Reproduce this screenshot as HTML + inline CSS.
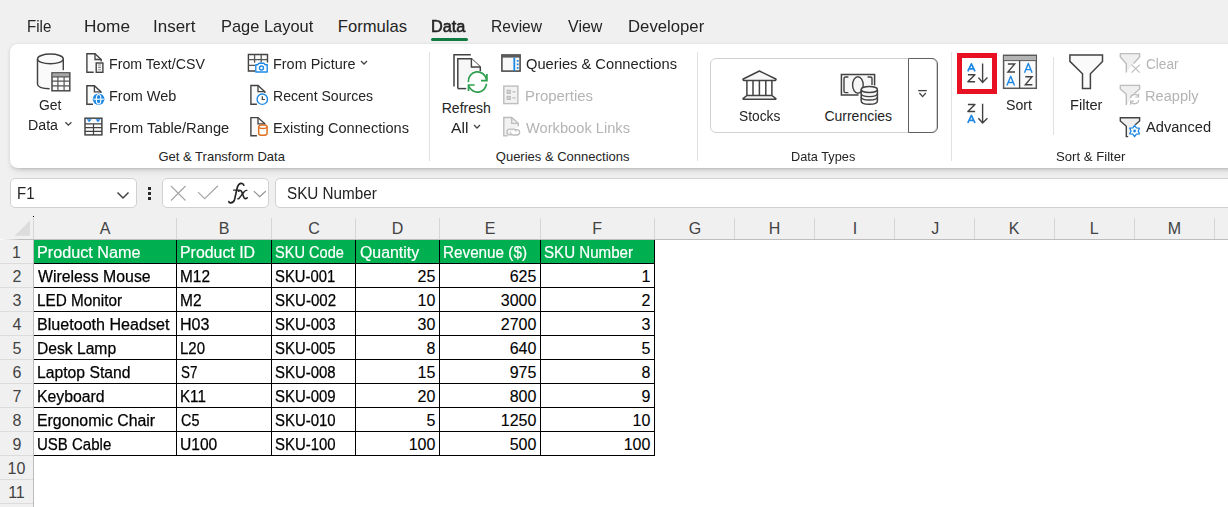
<!DOCTYPE html>
<html><head><meta charset="utf-8"><style>
html,body{margin:0;padding:0;}
body{width:1228px;height:507px;overflow:hidden;position:relative;background:#f0f0f0;font-family:"Liberation Sans",sans-serif;}
.t{position:absolute;white-space:nowrap;line-height:1;}
svg{overflow:visible}
</style></head><body>
<div style="position:absolute;left:0;top:208px;width:1228px;height:299px;background:#fff;"></div>
<div class="t" style="left:27.19px;top:19px;font-size:16.6px;color:#242424;transform:scaleX(0.9095);transform-origin:0 0;">File</div>
<div class="t" style="left:83.56px;top:19px;font-size:16.6px;color:#242424;transform:scaleX(1.0387);transform-origin:0 0;">Home</div>
<div class="t" style="left:153.48px;top:19px;font-size:16.6px;color:#242424;transform:scaleX(1.0222);transform-origin:0 0;">Insert</div>
<div class="t" style="left:220.61px;top:19px;font-size:16.6px;color:#242424;transform:scaleX(0.9905);transform-origin:0 0;">Page Layout</div>
<div class="t" style="left:337.80px;top:19px;font-size:16.6px;color:#242424;">Formulas</div>
<div class="t" style="left:490.66px;top:19px;font-size:16.6px;color:#242424;transform:scaleX(0.9371);transform-origin:0 0;">Review</div>
<div class="t" style="left:568.30px;top:19px;font-size:16.6px;color:#242424;transform:scaleX(0.9650);transform-origin:0 0;">View</div>
<div class="t" style="left:627.89px;top:19px;font-size:16.6px;color:#242424;transform:scaleX(1.0079);transform-origin:0 0;">Developer</div>
<div class="t" style="left:431.02px;top:19px;font-size:16.6px;color:#242424;transform:scaleX(0.9821);transform-origin:0 0;-webkit-text-stroke:0.6px #242424;">Data</div>
<div style="position:absolute;left:431px;top:38px;width:37px;height:3px;background:#107c41;border-radius:2px;"></div>
<div style="position:absolute;left:6px;top:166px;width:1240px;height:12px;background:linear-gradient(#d2d2d2,#d2d2d2 16%,#e3e3e3 33%,#ececec 66%,#f0f0f0);-webkit-mask-image:linear-gradient(to right,transparent 2px,#000 16px);"></div>
<div style="position:absolute;left:10px;top:44px;width:1240px;height:124px;background:#fff;border-radius:8px;box-shadow:0 1px 4px rgba(0,0,0,0.14);"></div>
<div style="position:absolute;left:429px;top:52px;width:1px;height:109px;background:#e1e1e1;"></div>
<div style="position:absolute;left:697px;top:52px;width:1px;height:109px;background:#e1e1e1;"></div>
<div style="position:absolute;left:951px;top:52px;width:1px;height:109px;background:#e1e1e1;"></div>
<div style="position:absolute;left:1053px;top:57px;width:1px;height:78px;background:#e1e1e1;"></div>
<div class="t" style="left:158.50px;top:150px;font-size:13px;color:#242424;">Get &amp; Transform Data</div>
<div class="t" style="left:495.80px;top:150px;font-size:13px;color:#242424;">Queries &amp; Connections</div>
<div class="t" style="left:790.82px;top:150px;font-size:13px;color:#242424;transform:scaleX(0.9808);transform-origin:0 0;">Data Types</div>
<div class="t" style="left:1055.50px;top:150px;font-size:13px;color:#242424;transform:scaleX(1.0116);transform-origin:0 0;">Sort &amp; Filter</div>
<svg style="position:absolute;left:30px;top:48px" width="48" height="48" viewBox="30 48 48 48">
<path d="M37.5 58.9 V84.2 Q37.8 88.4 49.6 88.8 H51 V72 H63.3 V58.9 Z" fill="#fafafa"/>
<path d="M37.5 58.9 V84.2 Q37.8 88.4 49.6 88.8" fill="none" stroke="#424242" stroke-width="1.45"/>
<path d="M63.3 58.9 V70.2" fill="none" stroke="#424242" stroke-width="1.45"/>
<ellipse cx="50.4" cy="58.9" rx="12.9" ry="4.85" fill="#fafafa" stroke="#424242" stroke-width="1.45"/>
<rect x="52" y="72.9" width="17.8" height="17.9" fill="#fafafa" stroke="#424242" stroke-width="1.45"/>
<rect x="52.7" y="73.6" width="16.4" height="3.1" fill="#a6a6a6"/>
<path d="M52 76.9 H69.8 M52 81.2 H69.8 M52 85.9 H69.8 M57.9 76.9 V90.8 M64.1 76.9 V90.8" stroke="#555" stroke-width="1.2"/>
</svg>
<div class="t" style="left:39.30px;top:98px;font-size:14px;color:#242424;transform:scaleX(0.9922);transform-origin:0 0;">Get</div>
<div class="t" style="left:28.29px;top:118px;font-size:14px;color:#242424;transform:scaleX(1.0144);transform-origin:0 0;">Data</div>
<svg style="position:absolute;left:62px;top:118px" width="14" height="12" viewBox="62 118 14 12"><path d="M65.4 122.2 L68.4 125.2 L71.4 122.2" fill="none" stroke="#424242" stroke-width="1.3"/></svg>
<svg style="position:absolute;left:84px;top:50px" width="22" height="26" viewBox="84 50 22 26"><path d="M93.7 72.3 H86.9 V53.7 H95 L101.2 59.5 V61.6" fill="#fafafa" stroke="#424242" stroke-width="1.4"/><path d="M95 53.7 V59.5 H101.2" fill="none" stroke="#424242" stroke-width="1.3"/><rect x="96.2" y="63" width="6.7" height="9.3" fill="#f4f4f4" stroke="#424242" stroke-width="1.4"/><path d="M98.2 65 H100.9 M98.2 67.4 H100.9 M98.2 69.8 H100.9" stroke="#8a8a8a" stroke-width="1.1"/></svg>
<div class="t" style="left:108.79px;top:57px;font-size:14px;color:#242424;transform:scaleX(1.0131);transform-origin:0 0;">From Text/CSV</div>
<svg style="position:absolute;left:82px;top:82px" width="26" height="26" viewBox="82 82 26 26"><path d="M93 104.3 H86.9 V85.8 H94.4 L100.9 91.8 V93" fill="#fafafa" stroke="#424242" stroke-width="1.45"/><path d="M94.4 85.8 V91.8 H100.9" fill="none" stroke="#424242" stroke-width="1.3"/><circle cx="98.6" cy="99.2" r="5.8" fill="#1e88e5"/><path d="M93.4 99.2 H103.8" stroke="#fff" stroke-width="1.1"/><ellipse cx="98.6" cy="99.2" rx="2.3" ry="4.7" fill="none" stroke="#fff" stroke-width="1.1"/></svg>
<div class="t" style="left:108.77px;top:89px;font-size:14px;color:#242424;transform:scaleX(1.0342);transform-origin:0 0;">From Web</div>
<svg style="position:absolute;left:82px;top:114px" width="24" height="24" viewBox="82 114 24 24"><rect x="85" y="118.2" width="16.9" height="16.7" fill="#fafafa" stroke="#424242" stroke-width="1.45"/><path d="M85 123.8 H101.9 M85 127.6 H101.9 M85 131.3 H101.9 M93.5 123.8 V134.9" stroke="#424242" stroke-width="1.2"/><path d="M87.2 119.4 H91.2 L89.2 121.9 Z M96 119.4 H100 L98 121.9 Z" fill="#1e88e5" stroke="#1e88e5" stroke-width="0.6" stroke-linejoin="round"/></svg>
<div class="t" style="left:108.75px;top:121px;font-size:14px;color:#242424;transform:scaleX(1.0465);transform-origin:0 0;">From Table/Range</div>
<svg style="position:absolute;left:245px;top:50px" width="26" height="26" viewBox="245 50 26 26"><path d="M255 71 H248.4 V54.5 H267.5 V62.5" fill="#fafafa" stroke="#424242" stroke-width="1.4"/><path d="M248.4 59.6 H267.5 M248.4 65.4 H255 M254.6 54.5 V62.8 M261.2 54.5 V62.5" stroke="#555" stroke-width="1.3"/><path d="M255.8 72 V64.8 H257.6 L259 63.2 H263.8 L265.2 64.8 H267.2 V72 Z" fill="#fff" stroke="#1e88e5" stroke-width="1.4" stroke-linejoin="round"/><circle cx="261.5" cy="68" r="2" fill="none" stroke="#1e88e5" stroke-width="1.4"/></svg>
<div class="t" style="left:272.67px;top:57px;font-size:14px;color:#242424;transform:scaleX(1.0298);transform-origin:0 0;">From Picture</div>
<svg style="position:absolute;left:359px;top:59px" width="10" height="7" viewBox="0 0 10 7"><path d="M2 2 L5 5 L8 2" fill="none" stroke="#424242" stroke-width="1.3"/></svg>
<svg style="position:absolute;left:246px;top:82px" width="26" height="26" viewBox="246 82 26 26"><path d="M256.9 104.3 H250.9 V85.5 H258 L264.9 91.7 V93" fill="#fafafa" stroke="#424242" stroke-width="1.4"/><path d="M258 85.5 V91.7 H264.9" fill="none" stroke="#424242" stroke-width="1.3"/><circle cx="262.3" cy="99.2" r="5.2" fill="#fff" stroke="#1e88e5" stroke-width="1.4"/><path d="M262.3 96.2 V99.5 H265" fill="none" stroke="#424242" stroke-width="1.2"/></svg>
<div class="t" style="left:272.69px;top:89px;font-size:14px;color:#242424;transform:scaleX(1.0050);transform-origin:0 0;">Recent Sources</div>
<svg style="position:absolute;left:246px;top:114px" width="26" height="26" viewBox="246 114 26 26"><path d="M256.9 135.8 H250.9 V117.6 H258 L264.9 123.8 V124.6" fill="#fafafa" stroke="#424242" stroke-width="1.4"/><path d="M258 117.6 V123.8 H264.9" fill="none" stroke="#424242" stroke-width="1.3"/><path d="M258.7 126.8 V133.4 Q258.7 135.2 262.9 135.2 Q267.1 135.2 267.1 133.4 V126.8" fill="#fff" stroke="#e07020" stroke-width="1.5"/><ellipse cx="262.9" cy="126.8" rx="4.2" ry="1.7" fill="#fff" stroke="#e07020" stroke-width="1.5"/></svg>
<div class="t" style="left:272.66px;top:121px;font-size:14px;color:#242424;transform:scaleX(1.0398);transform-origin:0 0;">Existing Connections</div>
<svg style="position:absolute;left:445px;top:48px" width="50" height="50" viewBox="445 48 50 50">
<path d="M454 86.5 V54.8 H470.8" fill="none" stroke="#424242" stroke-width="1.5"/>
<path d="M457.8 88.6 V58.7 H471.4 L480.3 67 V71.3" fill="#f7f7f7" stroke="#424242" stroke-width="1.5"/>
<path d="M457.8 88.6 H466.2" fill="none" stroke="#424242" stroke-width="1.5"/>
<path d="M471.4 58.7 V67 H480.3" fill="#fff" stroke="#424242" stroke-width="1.4"/>
<circle cx="477.5" cy="82.5" r="9.2" fill="#fff"/>
<path d="M468.4 82.2 A9.1 9.1 0 0 1 486.5 79.8" fill="none" stroke="#2e9e4f" stroke-width="1.7"/>
<path d="M486.5 83.8 A9.1 9.1 0 0 1 468.9 86.2" fill="none" stroke="#2e9e4f" stroke-width="1.7"/>
<path d="M481 80.6 H486.9 V74" fill="none" stroke="#2e9e4f" stroke-width="1.7"/>
<path d="M474.6 85 H468.5 V91" fill="none" stroke="#2e9e4f" stroke-width="1.7"/>
</svg>
<div class="t" style="left:441.75px;top:101px;font-size:14px;color:#242424;">Refresh</div>
<div class="t" style="left:451.00px;top:121px;font-size:14px;color:#242424;transform:scaleX(1.1199);transform-origin:0 0;">All</div>
<svg style="position:absolute;left:472px;top:123px" width="10" height="7" viewBox="0 0 10 7"><path d="M2 2 L5 5 L8 2" fill="none" stroke="#424242" stroke-width="1.3"/></svg>
<svg style="position:absolute;left:499px;top:52px" width="25" height="23" viewBox="499 52 25 23"><rect x="501.9" y="55.1" width="18.2" height="16" fill="#f7f7f7" stroke="#424242" stroke-width="1.5"/><rect x="501.2" y="54.4" width="19.6" height="3.2" fill="#5a5a5a"/><path d="M514.3 57.5 V71" stroke="#1e88e5" stroke-width="1.8"/><path d="M516.8 60.8 H518.6 M516.8 64.3 H518.6 M516.8 67.8 H518.6" stroke="#1e88e5" stroke-width="1.8"/></svg>
<div class="t" style="left:526.00px;top:57px;font-size:14px;color:#242424;transform:scaleX(1.0489);transform-origin:0 0;">Queries &amp; Connections</div>
<svg style="position:absolute;left:498px;top:82px" width="28" height="26" viewBox="498 82 28 26"><rect x="503.8" y="86.1" width="14.1" height="17.5" fill="#f2f2f2" stroke="#bdbdbd" stroke-width="1.4"/><rect x="507.1" y="90.2" width="3.2" height="3.2" fill="#d4d4d4" stroke="#b4b4b4" stroke-width="0.9"/><rect x="507.1" y="96.3" width="3.2" height="3.2" fill="#d4d4d4" stroke="#b4b4b4" stroke-width="0.9"/><path d="M512.4 91.8 H515.6 M512.4 97.9 H515.6" stroke="#bdbdbd" stroke-width="1.2"/></svg>
<div class="t" style="left:524.93px;top:89px;font-size:14px;color:#b4b4b4;transform:scaleX(1.0668);transform-origin:0 0;">Properties</div>
<svg style="position:absolute;left:498px;top:114px" width="28" height="26" viewBox="498 114 28 26"><path d="M507.6 135.7 H503.8 V117.5 H511.7 L518.3 123.3 V126.2" fill="#f2f2f2" stroke="#bdbdbd" stroke-width="1.4"/><path d="M511.7 117.5 V123.3 H518.3" fill="none" stroke="#bdbdbd" stroke-width="1.3"/><path d="M511.6 134.8 H509.6 Q506.9 134.8 506.9 132 Q506.9 129.1 509.6 129.1 H513.5 Q516 129.1 516 131.6" fill="none" stroke="#bdbdbd" stroke-width="1.3"/><path d="M514.4 129.6 H516.8 Q519.6 129.6 519.6 132.3 Q519.6 135 516.8 135 H512.8 Q510.4 135 510.4 132.6" fill="none" stroke="#bdbdbd" stroke-width="1.3"/></svg>
<div class="t" style="left:526.00px;top:121px;font-size:14px;color:#b4b4b4;transform:scaleX(1.0469);transform-origin:0 0;">Workbook Links</div>
<div style="position:absolute;left:709.5px;top:58px;width:227px;height:74.5px;box-sizing:border-box;border:1px solid #d1d1d1;border-radius:6px;"></div>
<div style="position:absolute;left:908px;top:58px;width:29.5px;height:74.5px;box-sizing:border-box;border:1px solid #616161;border-radius:0 6px 6px 0;"></div>
<svg style="position:absolute;left:735px;top:64px" width="50" height="40" viewBox="735 64 50 40">
<path d="M759.4 71 L743.2 79 Q742.6 80 743.6 80.4 H775.4 Q776.4 80 775.8 79 Z" fill="#f7f7f7" stroke="#424242" stroke-width="1.5" stroke-linejoin="round"/>
<path d="M746.9 80.4 V95.3 M753 80.4 V95.3 M759.4 80.4 V95.3 M765.8 80.4 V95.3 M771.9 80.4 V95.3" stroke="#424242" stroke-width="1.5"/>
<path d="M746.9 95.5 H771.9 L775.9 98.6 Q776 99.3 775.2 99.3 H743.6 Q742.8 99.3 743 98.6 Z" fill="#f7f7f7" stroke="#424242" stroke-width="1.5" stroke-linejoin="round"/>
</svg>
<div class="t" style="left:739.40px;top:109px;font-size:14px;color:#242424;transform:scaleX(0.9854);transform-origin:0 0;">Stocks</div>
<svg style="position:absolute;left:835px;top:68px" width="50" height="40" viewBox="835 68 50 40">
<path d="M858.5 95 H841.4 V74.6 H874.6 V85.5" fill="#f7f7f7" stroke="#424242" stroke-width="1.5"/>
<path d="M848.4 77 H845.6 Q844 77 844 78.6 V91 Q844 92.6 845.6 92.6 H848.4" fill="none" stroke="#424242" stroke-width="1.4"/>
<path d="M867.6 77 H870.4 Q872 77 872 78.6 V85" fill="none" stroke="#424242" stroke-width="1.4"/>
<ellipse cx="857.9" cy="85" rx="5.3" ry="8.2" fill="none" stroke="#424242" stroke-width="1.4"/>
<path d="M861.2 89.5 V101 Q861.2 104.3 869.3 104.3 Q877.4 104.3 877.4 101 V89.5" fill="#f7f7f7" stroke="#424242" stroke-width="1.5"/>
<ellipse cx="869.3" cy="89.5" rx="8.1" ry="3" fill="#f7f7f7" stroke="#424242" stroke-width="1.5"/>
<path d="M861.2 93.6 Q861.2 96.6 869.3 96.6 Q877.4 96.6 877.4 93.6 M861.2 97 Q861.2 100 869.3 100 Q877.4 100 877.4 97" fill="none" stroke="#424242" stroke-width="1.4"/>
</svg>
<div class="t" style="left:824.40px;top:109px;font-size:14px;color:#242424;">Currencies</div>
<svg style="position:absolute;left:912px;top:85px" width="20" height="17" viewBox="912 85 20 17"><path d="M918.2 90.6 H926.8" stroke="#424242" stroke-width="1.3"/><path d="M919.4 93 L922.6 96.6 L925.8 93" fill="none" stroke="#424242" stroke-width="1.3"/></svg>
<div style="position:absolute;left:957px;top:53px;width:40px;height:40.5px;box-sizing:border-box;border:5px solid #e81123;"></div>
<svg style="position:absolute;left:962px;top:58px" width="30" height="31" viewBox="962 58 30 31"><path d="M967.8 71.4 L971.4 63.8 L975.0 71.4 M968.9 68.8 H973.9" fill="none" stroke="#1e88e5" stroke-width="1.7" stroke-linejoin="round"/><path d="M967.9 74.7 H974.9 L967.9 81.7 H975.0999999999999" fill="none" stroke="#424242" stroke-width="1.5" stroke-linejoin="round"/><path d="M982.6 63.4 V82.4 M978.4 77.60000000000001 L982.6 82.4 L987.4 77.60000000000001" fill="none" stroke="#424242" stroke-width="1.4"/></svg>
<svg style="position:absolute;left:962px;top:98px" width="30" height="30" viewBox="962 98 30 30"><path d="M967.9 104.5 H974.9 L967.9 111.5 H975.0999999999999" fill="none" stroke="#424242" stroke-width="1.5" stroke-linejoin="round"/><path d="M967.8 123 L971.4 115.4 L975.0 123 M968.9 120.4 H973.9" fill="none" stroke="#1e88e5" stroke-width="1.7" stroke-linejoin="round"/><path d="M982.6 103.7 V123 M978.4 118.2 L982.6 123 L987.4 118.2" fill="none" stroke="#424242" stroke-width="1.4"/></svg>
<svg style="position:absolute;left:998px;top:50px" width="45" height="45" viewBox="998 50 45 45"><rect x="1003.6" y="55.3" width="32.7" height="33" fill="#fafafa" stroke="#595959" stroke-width="1.5"/><rect x="1004.3" y="56" width="31.3" height="4.4" fill="#b4b4b4"/><path d="M1003.6 60.6 H1036.3" stroke="#595959" stroke-width="1"/><path d="M1019.6 60.6 V88.3" stroke="#424242" stroke-width="1.3"/><path d="M1007.9 64.0 H1014.7 L1007.9 72.0 H1015.0" fill="none" stroke="#424242" stroke-width="1.35" stroke-linejoin="miter"/><path d="M1006.9 85.5 L1010.6999999999999 76.30000000000001 L1014.5 85.5 M1008.3 82.42800000000001 H1013.1" fill="none" stroke="#1e88e5" stroke-width="1.4" stroke-linejoin="round"/><path d="M1024.5 72.7 L1028.3 63.5 L1032.1 72.7 M1025.9 69.628 H1030.6999999999998" fill="none" stroke="#1e88e5" stroke-width="1.4" stroke-linejoin="round"/><path d="M1025.3 76.7 H1032.1 L1025.3 84.7 H1032.3999999999999" fill="none" stroke="#424242" stroke-width="1.35" stroke-linejoin="miter"/></svg>
<div class="t" style="left:1006.40px;top:98px;font-size:14px;color:#242424;transform:scaleX(1.0122);transform-origin:0 0;">Sort</div>
<svg style="position:absolute;left:1064px;top:48px" width="46" height="47" viewBox="1064 48 46 47"><path d="M1069.9 55.1 H1102.5 V61.4 L1090.4 73.8 V88.5 H1082.5 V73.8 L1069.9 61.4 Z" fill="#fafafa" stroke="#424242" stroke-width="1.5" stroke-linejoin="miter"/></svg>
<div class="t" style="left:1069.96px;top:98px;font-size:14px;color:#242424;transform:scaleX(1.0444);transform-origin:0 0;">Filter</div>
<svg style="position:absolute;left:1116px;top:50px" width="29" height="26" viewBox="1116 50 29 26"><path d="M1126.3 72.6 V63.8 L1120.3 57 V53.6 H1139.6 V57 L1133.6 63.4" fill="#efefef" stroke="#bdbdbd" stroke-width="1.4"/><path d="M1131.5 64.6 L1139.8 72.6 M1139.8 64.6 L1131.5 72.6" stroke="#bdbdbd" stroke-width="1.2"/></svg>
<div class="t" style="left:1145.90px;top:57px;font-size:14px;color:#b4b4b4;transform:scaleX(0.9706);transform-origin:0 0;">Clear</div>
<svg style="position:absolute;left:1116px;top:82px" width="29" height="26" viewBox="1116 82 29 26"><path d="M1126.3 104.9 V94.2 L1120.3 88.9 V85.4 H1139.6 V88.9 L1134.5 93.6" fill="#efefef" stroke="#bdbdbd" stroke-width="1.4"/><path d="M1130.4 98 A4.4 4.4 0 0 1 1138.4 96.4 M1138.8 100 A4.4 4.4 0 0 1 1130.8 101.8" fill="none" stroke="#bdbdbd" stroke-width="1.3"/><path d="M1138.6 93.4 V97 H1135.2 M1130.6 104.8 V101.2 H1134" fill="none" stroke="#bdbdbd" stroke-width="1.2"/></svg>
<div class="t" style="left:1144.86px;top:89px;font-size:14px;color:#b4b4b4;transform:scaleX(1.0424);transform-origin:0 0;">Reapply</div>
<svg style="position:absolute;left:1116px;top:114px" width="29" height="26" viewBox="1116 114 29 26"><path d="M1128.2 136.6 H1126.3 V126.2 L1120.3 121 V117.8 H1139.6 V121 L1135.2 124.8" fill="#efefef" stroke="#424242" stroke-width="1.4"/><path d="M1134.60 125.40 L1136.40 127.88 L1139.45 128.20 L1138.20 131.00 L1139.45 133.80 L1136.40 134.12 L1134.60 136.60 L1132.80 134.12 L1129.75 133.80 L1131.00 131.00 L1129.75 128.20 L1132.80 127.88 Z" fill="#fff" stroke="#1e88e5" stroke-width="1.3" stroke-linejoin="round"/><circle cx="1134.6" cy="131" r="1.4" fill="#1e88e5"/></svg>
<div class="t" style="left:1145.90px;top:120px;font-size:14px;color:#242424;transform:scaleX(1.0458);transform-origin:0 0;">Advanced</div>
<div style="position:absolute;left:10px;top:178px;width:126.5px;height:30px;box-sizing:border-box;background:#fff;border:1px solid #d1d1d1;border-radius:5px;"></div>
<div class="t" style="left:16.67px;top:186px;font-size:16px;color:#242424;transform:scaleX(0.9340);transform-origin:0 0;">F1</div>
<svg style="position:absolute;left:114px;top:188px" width="18" height="14" viewBox="0 0 18 14"><path d="M3.5 4.5 L9 10 L14.5 4.5" fill="none" stroke="#424242" stroke-width="1.5"/></svg>
<div style="position:absolute;left:148px;top:187px;width:3px;height:3px;background:#2a2a2a;"></div>
<div style="position:absolute;left:148px;top:192px;width:3px;height:3px;background:#2a2a2a;"></div>
<div style="position:absolute;left:148px;top:197px;width:3px;height:3px;background:#2a2a2a;"></div>
<div style="position:absolute;left:162px;top:178px;width:106.5px;height:30px;box-sizing:border-box;background:#fff;border:1px solid #d1d1d1;border-radius:5px;"></div>
<svg style="position:absolute;left:168px;top:184px" width="20" height="20" viewBox="0 0 20 20"><path d="M3 2 L17.5 16.5 M17.5 2 L3 16.5" stroke="#a6a6a6" stroke-width="1.2"/></svg>
<svg style="position:absolute;left:196px;top:184px" width="24" height="20" viewBox="0 0 24 20"><path d="M2.1 8.1 L8.7 14.75 L21.9 1.75" fill="none" stroke="#a6a6a6" stroke-width="1.2"/></svg>
<svg style="position:absolute;left:226px;top:180px" width="24" height="26" viewBox="0 0 24 26"><g transform="translate(-226,-180)" fill="none" stroke="#242424" stroke-linecap="round"><path d="M243.8 185.2 Q243.2 183.1 241 183.3 Q238 183.8 237 188.6 L234.6 199.4 Q233.6 203 230.4 202.9 Q229 202.8 228.9 201.6" stroke-width="1.7"/><path d="M233.6 190.1 H239.2" stroke-width="1.3"/><path d="M238.6 191.2 Q240.8 189.4 242 192.4 L243.8 197.2 Q244.8 199.8 247.2 197.8" stroke-width="1.6"/><path d="M246.8 190.4 Q245.4 190.2 244 192 L239.8 197.4 Q238.8 199.2 237.8 198.8" stroke-width="1.4"/></g></svg>
<svg style="position:absolute;left:252px;top:188px" width="16" height="12" viewBox="0 0 16 12"><path d="M1.8 3.1 L7.7 8.7 L13.8 3.1" fill="none" stroke="#8a8a8a" stroke-width="1.1"/></svg>
<div style="position:absolute;left:274.5px;top:178px;width:960px;height:30px;box-sizing:border-box;background:#fff;border:1px solid #d1d1d1;border-radius:5px;"></div>
<div class="t" style="left:287.10px;top:186px;font-size:16px;color:#242424;transform:scaleX(0.9534);transform-origin:0 0;">SKU Number</div>
<div style="position:absolute;left:0px;top:208px;width:1228px;height:31px;background:#f0f0f0;"></div>
<div style="position:absolute;left:34px;top:239px;width:1194px;height:1px;background:#bdbdbd;"></div>
<div style="position:absolute;left:0px;top:239px;width:34px;height:1px;background:linear-gradient(to right,rgba(189,189,189,0),#bdbdbd 60%);"></div>
<div style="position:absolute;left:0px;top:240px;width:33px;height:267px;background:#f0f0f0;"></div>
<div style="position:absolute;left:33px;top:218px;width:1px;height:21px;background:#d6d6d6;"></div>
<div style="position:absolute;left:33px;top:239px;width:1px;height:268px;background:#bdbdbd;"></div>
<div style="position:absolute;left:176px;top:218px;width:1px;height:21px;background:#d6d6d6;"></div>
<div style="position:absolute;left:271px;top:218px;width:1px;height:21px;background:#d6d6d6;"></div>
<div style="position:absolute;left:355px;top:218px;width:1px;height:21px;background:#d6d6d6;"></div>
<div style="position:absolute;left:439px;top:218px;width:1px;height:21px;background:#d6d6d6;"></div>
<div style="position:absolute;left:540px;top:218px;width:1px;height:21px;background:#d6d6d6;"></div>
<div style="position:absolute;left:654px;top:218px;width:1px;height:21px;background:#d6d6d6;"></div>
<div style="position:absolute;left:734px;top:218px;width:1px;height:21px;background:#d6d6d6;"></div>
<div style="position:absolute;left:814px;top:218px;width:1px;height:21px;background:#d6d6d6;"></div>
<div style="position:absolute;left:894px;top:218px;width:1px;height:21px;background:#d6d6d6;"></div>
<div style="position:absolute;left:974px;top:218px;width:1px;height:21px;background:#d6d6d6;"></div>
<div style="position:absolute;left:1054px;top:218px;width:1px;height:21px;background:#d6d6d6;"></div>
<div style="position:absolute;left:1134px;top:218px;width:1px;height:21px;background:#d6d6d6;"></div>
<div style="position:absolute;left:1214px;top:218px;width:1px;height:21px;background:#d6d6d6;"></div>
<div class="t" style="left:99.80px;top:221px;font-size:16px;color:#424242;">A</div>
<div class="t" style="left:218.80px;top:221px;font-size:16px;color:#424242;">B</div>
<div class="t" style="left:308.30px;top:221px;font-size:16px;color:#424242;">C</div>
<div class="t" style="left:391.80px;top:221px;font-size:16px;color:#424242;">D</div>
<div class="t" style="left:484.80px;top:221px;font-size:16px;color:#424242;">E</div>
<div class="t" style="left:592.30px;top:221px;font-size:16px;color:#424242;">F</div>
<div class="t" style="left:688.80px;top:221px;font-size:16px;color:#424242;">G</div>
<div class="t" style="left:768.80px;top:221px;font-size:16px;color:#424242;">H</div>
<div class="t" style="left:852.80px;top:221px;font-size:16px;color:#424242;">I</div>
<div class="t" style="left:931.30px;top:221px;font-size:16px;color:#424242;">J</div>
<div class="t" style="left:1008.80px;top:221px;font-size:16px;color:#424242;">K</div>
<div class="t" style="left:1089.80px;top:221px;font-size:16px;color:#424242;">L</div>
<div class="t" style="left:1167.80px;top:221px;font-size:16px;color:#424242;">M</div>
<div class="t" style="left:1248.80px;top:221px;font-size:16px;color:#424242;">N</div>
<svg style="position:absolute;left:0px;top:210px" width="34" height="30" viewBox="0 210 34 30"><path d="M30 220.4 V235.8 H14.6 Z" fill="#dcdcdc"/></svg>
<div style="position:absolute;left:33px;top:216px;width:1px;height:1px;background:#000;"></div>
<div class="t" style="left:12.00px;top:245px;font-size:16px;color:#424242;">1</div>
<div style="position:absolute;left:0px;top:263px;width:33px;height:1px;background:#dcdcdc;"></div>
<div class="t" style="left:12.50px;top:269px;font-size:16px;color:#424242;">2</div>
<div style="position:absolute;left:0px;top:287px;width:33px;height:1px;background:#dcdcdc;"></div>
<div class="t" style="left:12.50px;top:293px;font-size:16px;color:#424242;">3</div>
<div style="position:absolute;left:0px;top:311px;width:33px;height:1px;background:#dcdcdc;"></div>
<div class="t" style="left:12.50px;top:317px;font-size:16px;color:#424242;">4</div>
<div style="position:absolute;left:0px;top:335px;width:33px;height:1px;background:#dcdcdc;"></div>
<div class="t" style="left:12.50px;top:341px;font-size:16px;color:#424242;">5</div>
<div style="position:absolute;left:0px;top:359px;width:33px;height:1px;background:#dcdcdc;"></div>
<div class="t" style="left:12.50px;top:365px;font-size:16px;color:#424242;">6</div>
<div style="position:absolute;left:0px;top:383px;width:33px;height:1px;background:#dcdcdc;"></div>
<div class="t" style="left:12.50px;top:389px;font-size:16px;color:#424242;">7</div>
<div style="position:absolute;left:0px;top:407px;width:33px;height:1px;background:#dcdcdc;"></div>
<div class="t" style="left:12.50px;top:413px;font-size:16px;color:#424242;">8</div>
<div style="position:absolute;left:0px;top:431px;width:33px;height:1px;background:#dcdcdc;"></div>
<div class="t" style="left:12.50px;top:437px;font-size:16px;color:#424242;">9</div>
<div style="position:absolute;left:0px;top:455px;width:33px;height:1px;background:#dcdcdc;"></div>
<div class="t" style="left:7.55px;top:461px;font-size:16px;color:#424242;">10</div>
<div style="position:absolute;left:0px;top:479px;width:33px;height:1px;background:#dcdcdc;"></div>
<div class="t" style="left:8.14px;top:485px;font-size:16px;color:#424242;">11</div>
<div style="position:absolute;left:0px;top:503px;width:33px;height:1px;background:#dcdcdc;"></div>
<div style="position:absolute;left:34px;top:240px;width:620px;height:23px;background:#00b050;"></div>
<div class="t" style="left:36.89px;top:245px;font-size:16px;color:#fff;transform:scaleX(1.0122);transform-origin:0 0;-webkit-text-stroke:0.2px #fff;">Product Name</div>
<div class="t" style="left:180.21px;top:245px;font-size:16px;color:#fff;transform:scaleX(0.9935);transform-origin:0 0;-webkit-text-stroke:0.2px #fff;">Product ID</div>
<div class="t" style="left:275.30px;top:245px;font-size:16px;color:#fff;transform:scaleX(0.9115);transform-origin:0 0;-webkit-text-stroke:0.2px #fff;">SKU Code</div>
<div class="t" style="left:359.60px;top:245px;font-size:16px;color:#fff;transform:scaleX(0.9918);transform-origin:0 0;-webkit-text-stroke:0.2px #fff;">Quantity</div>
<div class="t" style="left:443.05px;top:245px;font-size:16px;color:#fff;transform:scaleX(0.9537);transform-origin:0 0;-webkit-text-stroke:0.2px #fff;">Revenue ($)</div>
<div class="t" style="left:544.40px;top:245px;font-size:16px;color:#fff;transform:scaleX(0.9439);transform-origin:0 0;-webkit-text-stroke:0.2px #fff;">SKU Number</div>
<div class="t" style="left:37.60px;top:269px;font-size:16px;color:#000;transform:scaleX(0.9894);transform-origin:0 0;-webkit-text-stroke:0.25px #000;">Wireless Mouse</div>
<div class="t" style="left:179.94px;top:269px;font-size:16px;color:#000;transform:scaleX(0.9627);transform-origin:0 0;-webkit-text-stroke:0.25px #000;">M12</div>
<div class="t" style="left:275.30px;top:269px;font-size:16px;color:#000;transform:scaleX(0.9274);transform-origin:0 0;-webkit-text-stroke:0.25px #000;">SKU-001</div>
<div class="t" style="left:417.60px;top:269px;font-size:16px;color:#000;-webkit-text-stroke:0.1px #000;">25</div>
<div class="t" style="left:509.70px;top:269px;font-size:16px;color:#000;-webkit-text-stroke:0.1px #000;">625</div>
<div class="t" style="left:641.50px;top:269px;font-size:16px;color:#000;-webkit-text-stroke:0.1px #000;">1</div>
<div class="t" style="left:36.64px;top:293px;font-size:16px;color:#000;transform:scaleX(0.9560);transform-origin:0 0;-webkit-text-stroke:0.25px #000;">LED Monitor</div>
<div class="t" style="left:179.93px;top:293px;font-size:16px;color:#000;transform:scaleX(0.9705);transform-origin:0 0;-webkit-text-stroke:0.25px #000;">M2</div>
<div class="t" style="left:275.30px;top:293px;font-size:16px;color:#000;transform:scaleX(0.9397);transform-origin:0 0;-webkit-text-stroke:0.25px #000;">SKU-002</div>
<div class="t" style="left:417.60px;top:293px;font-size:16px;color:#000;-webkit-text-stroke:0.1px #000;">10</div>
<div class="t" style="left:500.80px;top:293px;font-size:16px;color:#000;-webkit-text-stroke:0.1px #000;">3000</div>
<div class="t" style="left:641.50px;top:293px;font-size:16px;color:#000;-webkit-text-stroke:0.1px #000;">2</div>
<div class="t" style="left:36.59px;top:317px;font-size:16px;color:#000;transform:scaleX(1.0061);transform-origin:0 0;-webkit-text-stroke:0.25px #000;">Bluetooth Headset</div>
<div class="t" style="left:179.89px;top:317px;font-size:16px;color:#000;transform:scaleX(1.0052);transform-origin:0 0;-webkit-text-stroke:0.25px #000;">H03</div>
<div class="t" style="left:275.30px;top:317px;font-size:16px;color:#000;transform:scaleX(0.9335);transform-origin:0 0;-webkit-text-stroke:0.25px #000;">SKU-003</div>
<div class="t" style="left:417.60px;top:317px;font-size:16px;color:#000;-webkit-text-stroke:0.1px #000;">30</div>
<div class="t" style="left:500.80px;top:317px;font-size:16px;color:#000;-webkit-text-stroke:0.1px #000;">2700</div>
<div class="t" style="left:641.50px;top:317px;font-size:16px;color:#000;-webkit-text-stroke:0.1px #000;">3</div>
<div class="t" style="left:36.62px;top:341px;font-size:16px;color:#000;transform:scaleX(0.9772);transform-origin:0 0;-webkit-text-stroke:0.25px #000;">Desk Lamp</div>
<div class="t" style="left:179.97px;top:341px;font-size:16px;color:#000;transform:scaleX(0.9342);transform-origin:0 0;-webkit-text-stroke:0.25px #000;">L20</div>
<div class="t" style="left:275.30px;top:341px;font-size:16px;color:#000;transform:scaleX(0.9335);transform-origin:0 0;-webkit-text-stroke:0.25px #000;">SKU-005</div>
<div class="t" style="left:426.50px;top:341px;font-size:16px;color:#000;-webkit-text-stroke:0.1px #000;">8</div>
<div class="t" style="left:509.70px;top:341px;font-size:16px;color:#000;-webkit-text-stroke:0.1px #000;">640</div>
<div class="t" style="left:641.50px;top:341px;font-size:16px;color:#000;-webkit-text-stroke:0.1px #000;">5</div>
<div class="t" style="left:36.62px;top:365px;font-size:16px;color:#000;transform:scaleX(0.9818);transform-origin:0 0;-webkit-text-stroke:0.25px #000;">Laptop Stand</div>
<div class="t" style="left:180.90px;top:365px;font-size:16px;color:#000;transform:scaleX(0.8337);transform-origin:0 0;-webkit-text-stroke:0.25px #000;">S7</div>
<div class="t" style="left:275.30px;top:365px;font-size:16px;color:#000;transform:scaleX(0.9335);transform-origin:0 0;-webkit-text-stroke:0.25px #000;">SKU-008</div>
<div class="t" style="left:417.60px;top:365px;font-size:16px;color:#000;-webkit-text-stroke:0.1px #000;">15</div>
<div class="t" style="left:509.70px;top:365px;font-size:16px;color:#000;-webkit-text-stroke:0.1px #000;">975</div>
<div class="t" style="left:641.50px;top:365px;font-size:16px;color:#000;-webkit-text-stroke:0.1px #000;">8</div>
<div class="t" style="left:36.61px;top:389px;font-size:16px;color:#000;transform:scaleX(0.9866);transform-origin:0 0;-webkit-text-stroke:0.25px #000;">Keyboard</div>
<div class="t" style="left:179.95px;top:389px;font-size:16px;color:#000;transform:scaleX(0.9476);transform-origin:0 0;-webkit-text-stroke:0.25px #000;">K11</div>
<div class="t" style="left:275.30px;top:389px;font-size:16px;color:#000;transform:scaleX(0.9335);transform-origin:0 0;-webkit-text-stroke:0.25px #000;">SKU-009</div>
<div class="t" style="left:417.60px;top:389px;font-size:16px;color:#000;-webkit-text-stroke:0.1px #000;">20</div>
<div class="t" style="left:509.70px;top:389px;font-size:16px;color:#000;-webkit-text-stroke:0.1px #000;">800</div>
<div class="t" style="left:641.50px;top:389px;font-size:16px;color:#000;-webkit-text-stroke:0.1px #000;">9</div>
<div class="t" style="left:36.61px;top:413px;font-size:16px;color:#000;transform:scaleX(0.9913);transform-origin:0 0;-webkit-text-stroke:0.25px #000;">Ergonomic Chair</div>
<div class="t" style="left:180.90px;top:413px;font-size:16px;color:#000;transform:scaleX(0.9000);transform-origin:0 0;-webkit-text-stroke:0.25px #000;">C5</div>
<div class="t" style="left:275.30px;top:413px;font-size:16px;color:#000;transform:scaleX(0.9335);transform-origin:0 0;-webkit-text-stroke:0.25px #000;">SKU-010</div>
<div class="t" style="left:426.50px;top:413px;font-size:16px;color:#000;-webkit-text-stroke:0.1px #000;">5</div>
<div class="t" style="left:500.80px;top:413px;font-size:16px;color:#000;-webkit-text-stroke:0.1px #000;">1250</div>
<div class="t" style="left:632.60px;top:413px;font-size:16px;color:#000;-webkit-text-stroke:0.1px #000;">10</div>
<div class="t" style="left:36.66px;top:437px;font-size:16px;color:#000;transform:scaleX(0.9380);transform-origin:0 0;-webkit-text-stroke:0.25px #000;">USB Cable</div>
<div class="t" style="left:179.93px;top:437px;font-size:16px;color:#000;transform:scaleX(0.9745);transform-origin:0 0;-webkit-text-stroke:0.25px #000;">U100</div>
<div class="t" style="left:275.30px;top:437px;font-size:16px;color:#000;transform:scaleX(0.9335);transform-origin:0 0;-webkit-text-stroke:0.25px #000;">SKU-100</div>
<div class="t" style="left:408.70px;top:437px;font-size:16px;color:#000;-webkit-text-stroke:0.1px #000;">100</div>
<div class="t" style="left:509.70px;top:437px;font-size:16px;color:#000;-webkit-text-stroke:0.1px #000;">500</div>
<div class="t" style="left:623.70px;top:437px;font-size:16px;color:#000;-webkit-text-stroke:0.1px #000;">100</div>
<div style="position:absolute;left:176px;top:240px;width:1px;height:216px;background:#000;"></div>
<div style="position:absolute;left:271px;top:240px;width:1px;height:216px;background:#000;"></div>
<div style="position:absolute;left:355px;top:240px;width:1px;height:216px;background:#000;"></div>
<div style="position:absolute;left:439px;top:240px;width:1px;height:216px;background:#000;"></div>
<div style="position:absolute;left:540px;top:240px;width:1px;height:216px;background:#000;"></div>
<div style="position:absolute;left:654px;top:240px;width:1px;height:216px;background:#000;"></div>
<div style="position:absolute;left:34px;top:263px;width:621px;height:1px;background:#000;"></div>
<div style="position:absolute;left:34px;top:287px;width:621px;height:1px;background:#000;"></div>
<div style="position:absolute;left:34px;top:311px;width:621px;height:1px;background:#000;"></div>
<div style="position:absolute;left:34px;top:335px;width:621px;height:1px;background:#000;"></div>
<div style="position:absolute;left:34px;top:359px;width:621px;height:1px;background:#000;"></div>
<div style="position:absolute;left:34px;top:383px;width:621px;height:1px;background:#000;"></div>
<div style="position:absolute;left:34px;top:407px;width:621px;height:1px;background:#000;"></div>
<div style="position:absolute;left:34px;top:431px;width:621px;height:1px;background:#000;"></div>
<div style="position:absolute;left:34px;top:455px;width:621px;height:1px;background:#000;"></div>
</body></html>
